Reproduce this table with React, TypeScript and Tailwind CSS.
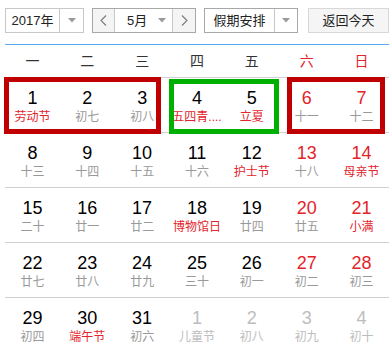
import React from "react";

type Day = { n: number; sub: string; red?: boolean; fest?: boolean; other?: boolean };

const weeks: Day[][] = [
	[
		{ n: 1, sub: "劳动节", fest: true },
		{ n: 2, sub: "初七" },
		{ n: 3, sub: "初八" },
		{ n: 4, sub: "五四青....", fest: true },
		{ n: 5, sub: "立夏", fest: true },
		{ n: 6, sub: "十一", red: true },
		{ n: 7, sub: "十二", red: true },
	],
	[
		{ n: 8, sub: "十三" },
		{ n: 9, sub: "十四" },
		{ n: 10, sub: "十五" },
		{ n: 11, sub: "十六" },
		{ n: 12, sub: "护士节", fest: true },
		{ n: 13, sub: "十八", red: true },
		{ n: 14, sub: "母亲节", red: true, fest: true },
	],
	[
		{ n: 15, sub: "二十" },
		{ n: 16, sub: "廿一" },
		{ n: 17, sub: "廿二" },
		{ n: 18, sub: "博物馆日", fest: true },
		{ n: 19, sub: "廿四" },
		{ n: 20, sub: "廿五", red: true },
		{ n: 21, sub: "小满", red: true, fest: true },
	],
	[
		{ n: 22, sub: "廿七" },
		{ n: 23, sub: "廿八" },
		{ n: 24, sub: "廿九" },
		{ n: 25, sub: "三十" },
		{ n: 26, sub: "初一" },
		{ n: 27, sub: "初二", red: true },
		{ n: 28, sub: "初三", red: true },
	],
	[
		{ n: 29, sub: "初四" },
		{ n: 30, sub: "端午节", fest: true },
		{ n: 31, sub: "初六" },
		{ n: 1, sub: "儿童节", other: true },
		{ n: 2, sub: "初八", other: true },
		{ n: 3, sub: "初九", other: true },
		{ n: 4, sub: "初十", other: true },
	],
];

const weekdays = ["一", "二", "三", "四", "五", "六", "日"];

/* 下拉三角 */
function Caret() {
	return (
		<svg width="8" height="5" viewBox="0 0 8 5">
			<path d="M0 0 L8 0 L4 4.5 Z" fill="#9a9a9a" />
		</svg>
	);
}

function Chevron({ dir }: { dir: "l" | "r" }) {
	return (
		<svg width="7" height="11" viewBox="0 0 7 11">
			<path
				d={dir === "l" ? "M6 0.5 L1 5.5 L6 10.5" : "M1 0.5 L6 5.5 L1 10.5"}
				fill="none"
				stroke="#7a7a7a"
				strokeWidth="1.1"
			/>
		</svg>
	);
}

export default function App() {
	return (
		<div
			className="relative w-[392px] h-[361px] bg-white overflow-hidden"
			style={{ fontFamily: '"Liberation Sans", "Noto Sans CJK SC", sans-serif' }}
		>
			{/* 顶部控件 */}
			<div className="flex items-center h-[25px] mt-[8px] ml-[5px] text-[13px] text-[#222]">
				<div className="flex h-[25px] w-[79px] border border-[#c8c8c8]">
					<div className="flex items-center justify-center w-[54px] border-r border-[#c8c8c8]">
						2017年
					</div>
					<div className="flex flex-1 items-center justify-center">
						<Caret />
					</div>
				</div>
				<div className="ml-[8px] flex h-[25px] w-[104px] border border-[#a8a8a8]">
					<div className="flex items-center justify-center w-[22px] border-r border-[#c8c8c8] bg-[#f4f4f4]">
						<Chevron dir="l" />
					</div>
					<div className="flex flex-1 items-center pl-[12px] pr-[6px] justify-between">
						<span>5月</span>
						<Caret />
					</div>
					<div className="flex items-center justify-center w-[23px] border-l border-[#c8c8c8] bg-[#f4f4f4]">
						<Chevron dir="r" />
					</div>
				</div>
				<div className="ml-[8px] flex h-[25px] w-[94px] border border-[#a8a8a8]">
					<div className="flex items-center justify-center w-[70px] border-r border-[#c8c8c8]">
						假期安排
					</div>
					<div className="flex flex-1 items-center justify-center">
						<Caret />
					</div>
				</div>
				<div className="ml-[10px] flex h-[25px] w-[81px] items-center justify-center border border-[#d8d8d8] bg-[#f5f5f5]">
					返回今天
				</div>
			</div>

			{/* 蓝色分隔线 */}
			<div className="mt-[11px] ml-[5px] w-[384px] h-px bg-[#5aaaf4]" />

			<div className="ml-[5px] w-[384px]">
				{/* 星期 */}
				<div className="grid grid-cols-7 h-[33px] border-b border-[#d0d0d0] text-[14px]">
					{weekdays.map((w, i) => (
						<div
							key={w}
							className={
								"flex items-center justify-center " +
								(i >= 5 ? "text-[#e3242b]" : "text-[#333]")
							}
						>
							{w}
						</div>
					))}
				</div>

				{/* 日期 */}
				{weeks.map((week, wi) => (
					<div
						key={wi}
						className={
							"grid grid-cols-7 h-[55px] " +
							(wi < weeks.length - 1 ? "border-b border-[#d0d0d0]" : "")
						}
					>
						{week.map((d, di) => {
							const numColor = d.other
								? "text-[#bdbdbd]"
								: d.red
									? "text-[#e3242b]"
									: "text-black";
							const subColor = d.other
								? "text-[#bdbdbd]"
								: d.fest
									? "text-[#e3242b]"
									: "text-[#999]";
							return (
								<div key={di} className="flex flex-col items-center pt-[10px]">
									<span className={"text-[18px] leading-[20px] " + numColor}>{d.n}</span>
									<span className={"mt-[2px] text-[12px] leading-[14px] whitespace-nowrap " + subColor}>
										{d.sub}
									</span>
								</div>
							);
						})}
					</div>
				))}
			</div>

			{/* 假期框 */}
			<div className="absolute left-[4px] top-[77px] w-[157px] h-[57px] border-[5px] border-[#c00000]" />
			<div className="absolute left-[169px] top-[79px] w-[110px] h-[55px] border-[5px] border-[#00b000]" />
			<div className="absolute left-[287px] top-[77px] w-[98px] h-[57px] border-[5px] border-[#c00000]" />
		</div>
	);
}
